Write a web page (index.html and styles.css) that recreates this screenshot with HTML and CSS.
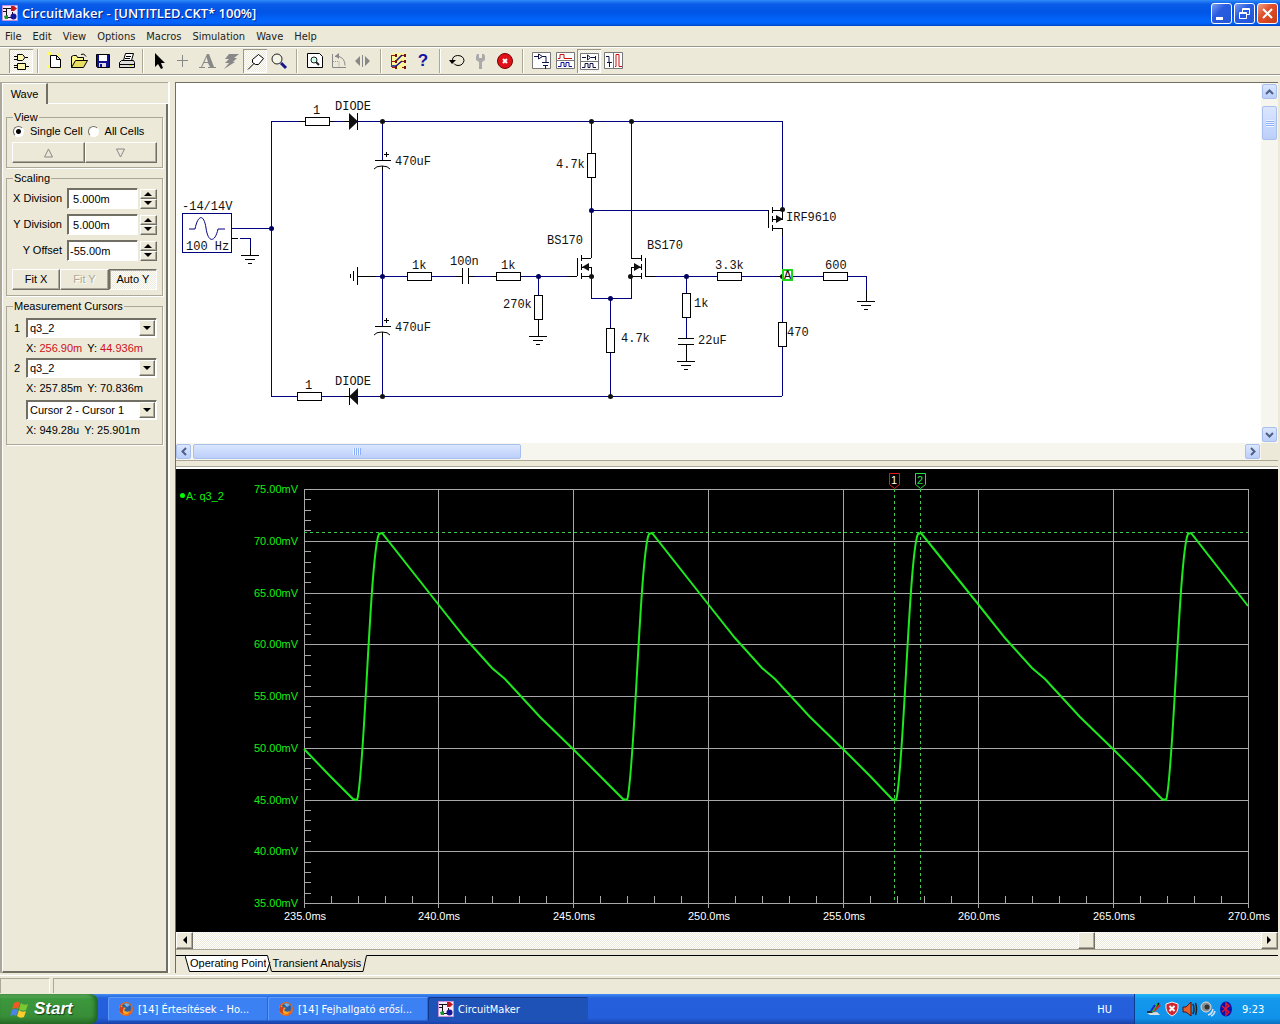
FILE: index.html
```html
<!DOCTYPE html>
<html lang="en">
<head>
  <meta charset="UTF-8" />
  <meta name="viewport" content="width=device-width, initial-scale=1.0" />
  <title>CircuitMaker - [UNTITLED.CKT* 100%]</title>
  <link rel="stylesheet" href="styles.css">
</head>
<body>
  <svg class="defs" width="0" height="0" aria-hidden="true">
    <symbol id="app-icon" viewBox="0 0 16 16">
      <path fill="#f6e8f8" stroke="#c78fd8" d="M.5.5h15v15H.5z"/>
      <path fill="none" stroke="#111" d="M1 3.500h9M4.500 3v9M1 6.500h4M4 12.500h5M10.500 7v3"/>
      <path fill="#c4141c" d="M9 1h3l3 2.500L12 6H9z"/>
      <circle cx="11.500" cy="11.500" r="3" fill="#16169a"/>
      <path fill="#139a2c" d="M2 11l4-1v4H3z"/>
    </symbol>
    <symbol id="firefox" viewBox="0 0 16 16">
      <circle cx="8" cy="8" r="7" fill="#e8661b"/>
      <circle cx="8.500" cy="7" r="4.800" fill="#2c5fa8"/>
      <path fill="#6fb6e6" d="M6 3q3-2 6 1l-3 2z"/>
      <path fill="#f7a823" d="M1 5q2-1 4 1l3 1-2 2q2 3 6 1-2 4-6 3.500T1 9z"/>
      <path fill="#d0401a" d="M2 3l1 3 3 0-1 3q-1 3 2 4-5 0-6-4z"/>
    </symbol>
  </svg>

  <header class="titlebar">
    <svg class="app-icon"><use href="#app-icon"/></svg>
    <h1>CircuitMaker - [UNTITLED.CKT* 100%]</h1>
    <div class="window-buttons">
      <button class="win" aria-label="Minimize"><svg width="19" height="19"><path fill="#fff" d="M4 13h7v3H4z"/></svg></button>
      <button class="win" aria-label="Restore"><svg width="19" height="19" fill="none" stroke="#fff"><path d="M7.500 8V4.500h7v6H12M7 5.500h8"/><path d="M4.500 8.500h7v6h-7zM4 9.500h8"/></svg></button>
      <button class="win close" aria-label="Close"><svg width="19" height="19"><path stroke="#fff" stroke-width="2" d="M5 5l9 9M14 5l-9 9"/></svg></button>
    </div>
  </header>

  <nav class="menubar">
    <a href="#">File</a><a href="#">Edit</a><a href="#">View</a><a href="#">Options</a><a href="#">Macros</a><a href="#">Simulation</a><a href="#">Wave</a><a href="#">Help</a>
  </nav>

  <div class="toolbar">
    <button class="tool pressed" aria-label="Parts"><svg viewBox="0 0 24 24"><path fill="#fff8b0" stroke="#000" d="M8.500 5.500h5q4 3 0 6h-5zM8.500 14.500h8v6h-8z"/><path stroke="#000" d="M5 7.500h3M5 10.500h3M16 8.500h3M5 16.500h3M5 18.500h3M17 17.500h3"/></svg></button>
    <span class="sep"></span>
    <button class="tool" aria-label="New"><svg viewBox="0 0 24 24"><path fill="#ff5" d="M5 3h3v3H5zM15 4l3 3h-3zM4 16h3v3H4zM16 17h3v3h-3z"/><path fill="#fff" stroke="#000" d="M7.500 6.500h6l4 4v8h-10zM13.500 6.500v4h4"/></svg></button>
    <button class="tool" aria-label="Open"><svg viewBox="0 0 24 24"><path fill="#fbf58c" stroke="#000" d="M4.500 18.500v-11l2-1h3l1 2h6v3"/><path fill="#e8de62" stroke="#000" d="M4.500 18.500l4-7h12l-4 7z"/><path fill="none" stroke="#000" d="M14 5.500q3-2 5 2"/></svg></button>
    <button class="tool" aria-label="Save"><svg viewBox="0 0 24 24"><path fill="#101090" stroke="#000" d="M5.500 5.500h13v13h-12l-1-1z"/><path fill="#fff" d="M8 6h8v6H8z"/><path fill="#ddd" d="M8 14h7v4H8z"/><path fill="#101090" d="M9 15h2v3H9z"/></svg></button>
    <button class="tool" aria-label="Print"><svg viewBox="0 0 24 24"><path fill="#fff" stroke="#000" d="M8.500 11.500l2-7h8l-2 7z"/><path stroke="#000" d="M11 7.500h5M10 9.500h5"/><path fill="#ddd" stroke="#000" d="M4.500 13.500l2-2h12l1 2v5h-15zM4 15.500h15"/><path fill="#dd0" d="M14 16h3v1h-3z"/></svg></button>
    <span class="sep tight"></span>
    <button class="tool" aria-label="Arrow"><svg viewBox="0 0 24 24"><path d="M8 4v14l3-3 3 5 2-1-2-5h4z"/></svg></button>
    <button class="tool" aria-label="Wire"><svg viewBox="0 0 24 24"><path stroke="#888" d="M11.500 6v12M6 11.500h11"/></svg></button>
    <button class="tool" aria-label="Text"><svg viewBox="0 0 24 24"><path fill="#888" d="M12 5h2l5 13h-4l-2-4H9l-2 4H6zM11.500 8L9.500 13h3.500z"/><path stroke="#888" d="M4 18.500h6M13 18.500h8"/></svg></button>
    <button class="tool" aria-label="Delete"><svg viewBox="0 0 24 24"><path fill="#888" d="M10 5h10l-5 4h3l-4 4h2L5 20l5-6H6l4-4H6z"/></svg></button>
    <button class="tool pressed" aria-label="Probe"><svg viewBox="0 0 24 24"><path fill="#fff" stroke="#000" d="M9.500 13.500v-3l6-5 5 4-5 6h-3zM5 20.500l6-6"/></svg></button>
    <button class="tool" aria-label="Zoom"><svg viewBox="0 0 24 24"><circle cx="10" cy="10" r="5" fill="#f4f4e8" stroke="#222"/><path stroke="#16168c" stroke-width="3" d="M14 14l5 5"/></svg></button>
    <span class="sep wide"></span>
    <button class="tool" aria-label="Zoom to fit"><svg viewBox="0 0 24 24"><path fill="#fff" stroke="#000" d="M4.500 4.500h12l3 3v11h-15z"/><circle cx="11" cy="11" r="3" fill="#cfe" stroke="#222"/><path stroke="#222" stroke-width="2" d="M13 13l3 3"/></svg></button>
    <button class="tool" aria-label="Rotate"><svg viewBox="0 0 24 24"><path fill="none" stroke="#888" d="M5.500 5v13.500H19M8 7.500h4q6 2 6 9"/><path fill="none" stroke="#999" stroke-dasharray="1 1" d="M6 12.500h6v6"/><path fill="#888" d="M12 4v6L8 7z"/></svg></button>
    <button class="tool" aria-label="Mirror"><svg viewBox="0 0 24 24"><path fill="#888" d="M9 7v10l-5-5zM14 7v10l5-5z"/><path stroke="#888" d="M11.500 6v12"/></svg></button>
    <span class="sep wide"></span>
    <button class="tool" aria-label="Digital options"><svg viewBox="0 0 24 24"><path fill="#fff59a" d="M5 4h14v16H5z"/><path fill="none" stroke="#a01818" d="M5 6.500h4M15 6.500h4M5 12.500h4M15 12.500h4M5 18.500h4M15 18.500h4M4.500 6v12"/><path fill="none" stroke="#12128c" stroke-width="1.500" d="M9 12l6-6M5 17h4l6-5"/><path fill="#701010" d="M8 5h2v3H8zM17 5h2v3h-2zM8 11h2v3H8zM17 11h2v3h-2zM8 17h2v3H8zM17 17h2v3h-2z"/></svg></button>
    <button class="tool help" aria-label="Help">?</button>
    <span class="sep"></span>
    <button class="tool" aria-label="Reset"><svg viewBox="0 0 24 24"><path fill="none" stroke="#000" d="M7.500 11q0-4 5-4.500 6 0 6.500 5-1 5-6 5-3 0-4-2"/><path d="M4 11h7l-4 4z"/></svg></button>
    <button class="tool" aria-label="Analysis setup"><svg viewBox="0 0 24 24"><path fill="#aaa" d="M8 5h2v4h3V5h2l1 2v4l-3 2v7h-3v-7l-3-2V7z"/></svg></button>
    <button class="tool" aria-label="Stop"><svg viewBox="0 0 24 24"><circle cx="12" cy="12" r="7.500" fill="#e01018" stroke="#700"/><path stroke="#fff" stroke-width="2" d="M10 10l4 4M14 10l-4 4"/></svg></button>
    <span class="sep wide"></span>
    <button class="tool" aria-label="Schematic view"><svg viewBox="0 0 24 24"><path fill="#fff" stroke="#777" d="M3.500 3.500h18v16h-18z"/><path fill="none" stroke="#114" d="M5 7.500h4M9.500 5v5l4-2.500zM13 7.500h4v6M13 13.500h7M14 16.500h5M16.500 17v3"/></svg></button>
    <button class="tool" aria-label="Waveform view"><svg viewBox="0 0 24 24"><path fill="#fff" stroke="#777" d="M3.500 3.500h18v16h-18zM3 11.500h18"/><path fill="none" stroke="#c11" d="M5 9.500h2v-4h4v4h8"/><path fill="none" stroke="#119" d="M5 17.500h3v-4h3v4h2v-4h3v4h3"/></svg></button>
    <button class="tool pressed" aria-label="Split horizontal"><svg viewBox="0 0 24 24"><path fill="#fff" stroke="#777" d="M3.500 4.500h18v16h-18zM3 12.500h18"/><path fill="none" stroke="#114" d="M5 8.500h4M10.500 6v5l3-2.500zM14 8.500h4M18.500 7v4M5 18.500h3v-4h3v4h2v-4h3v4h3"/></svg></button>
    <button class="tool" aria-label="Split vertical"><svg viewBox="0 0 24 24"><path fill="#fff" stroke="#777" d="M3.500 3.500h18v16h-18zM12.500 3v16"/><path fill="none" stroke="#114" d="M5 7.500h3v6M6 13.500h5M8.500 14v4"/><path fill="none" stroke="#c11" d="M14 17.500h1v-12h3v12h3"/></svg></button>
  </div>

  <main class="workspace">
    <aside class="sidebar">
      <div class="side-tabs"><button class="side-tab">Wave</button><span class="side-rest"></span></div>
      <form class="side-panel">
        <fieldset>
          <legend>View</legend>
          <div class="radios">
            <label><input type="radio" name="cells" checked>Single Cell</label>
            <label><input type="radio" name="cells">All Cells</label>
          </div>
          <div class="button-row">
            <button type="button" aria-label="Previous cell"><svg width="11" height="10" fill="none" stroke="#888"><path d="M5.500 1l4 8h-8z"/></svg></button>
            <button type="button" aria-label="Next cell"><svg width="11" height="10" fill="none" stroke="#888"><path d="M1.500 1h8l-4 8z"/></svg></button>
          </div>
        </fieldset>

        <fieldset class="scaling">
          <legend>Scaling</legend>
          <div class="field"><label for="xdiv">X Division</label><input id="xdiv" type="text" value=" 5.000m"><span class="spin"><button type="button" aria-label="X up"><svg width="9" height="5"><path d="M0 5l4-4 4 4z"/></svg></button><button type="button" aria-label="X down"><svg width="9" height="5"><path d="M0 0l4 4 4-4z"/></svg></button></span></div>
          <div class="field"><label for="ydiv">Y Division</label><input id="ydiv" type="text" value=" 5.000m"><span class="spin"><button type="button" aria-label="Y up"><svg width="9" height="5"><path d="M0 5l4-4 4 4z"/></svg></button><button type="button" aria-label="Y down"><svg width="9" height="5"><path d="M0 0l4 4 4-4z"/></svg></button></span></div>
          <div class="field"><label for="yoff">Y Offset</label><input id="yoff" type="text" value="-55.00m"><span class="spin"><button type="button" aria-label="Offset up"><svg width="9" height="5"><path d="M0 5l4-4 4 4z"/></svg></button><button type="button" aria-label="Offset down"><svg width="9" height="5"><path d="M0 0l4 4 4-4z"/></svg></button></span></div>
          <div class="button-row">
            <button type="button">Fit X</button>
            <button type="button" disabled>Fit Y</button>
            <button type="button" class="pressed">Auto Y</button>
          </div>
        </fieldset>

        <fieldset class="cursors">
          <legend>Measurement Cursors</legend>
          <label for="cur1">1</label>
          <span class="combo"><select id="cur1"><option>q3_2</option></select><i class="drop"></i></span>
          <p class="readout"><span>X: <b>256.90m</b></span><span>Y: <b>44.936m</b></span></p>
          <label for="cur2">2</label>
          <span class="combo"><select id="cur2"><option>q3_2</option></select><i class="drop"></i></span>
          <p class="readout"><span>X: 257.85m</span><span>Y: 70.836m</span></p>
          <span class="combo diff"><select aria-label="Difference"><option>Cursor 2 - Cursor 1</option></select><i class="drop"></i></span>
          <p class="readout"><span>X: 949.28u</span><span>Y: 25.901m</span></p>
        </fieldset>
      </form>
    </aside>

    <section class="documents">
      <div class="schematic-pane">
        <svg class="schematic" viewBox="176 83 1085 360">
          <defs>
            <path id="res-h" class="part" d="M-12-4h24v8h-24z"/>
            <path id="res-v" class="part" d="M-4-12h8v24h-8z"/>
            <path id="gnd" class="lead" d="M-9 0h18M-5 4h10M-2 8h4"/>
            <g id="pcap"><path class="lead" d="M-7 0h16M2-6h5M4-8v5"/><path class="curve" d="M-8 9q2-3 8-3t8 3"/></g>
          </defs>

          <!-- wires -->
          <path class="wire" d="M231 228H271M271 121V396M271 121H305M329 121H349M357 121H782V210M382 121V160M382 166V326M382 332V396M357 276H407M431 276H462M468 276H496M520 276H577M538 276V295M591 121V153M591 177V258M631 121V258M591 210H768M591 276V298H631V276M610 298V328M610 352V396M645 276H717M686 276V293M686 317V338M741 276H823M782 228V322M782 346V396M847 276H866V301M271 396H297M321 396H349M357 396H782M240 238H250V255"/>
          <path class="lead" d="M231 238h7M300 121h5M329 121h5M344 121h5M344 396h5M357 276h18M456 276h6M468 276h6M491 276h5M567 276h10M645 276h10M538 319v17M686 344v17M382 166v5M382 332v5M250 248v7M866 290v11M778 276h4"/>

          <!-- signal generator -->
          <path class="wire" d="M182 213h49v39h-49z"/>
          <path class="sine" d="M189 229h6C198 214 204 214 206 228 208 243 215 243 218 229h7"/>

          <use href="#res-h" x="317" y="121"/><use href="#res-h" x="309" y="396"/><use href="#res-h" x="419" y="276"/>
          <use href="#res-h" x="508" y="276"/><use href="#res-h" x="729" y="276"/><use href="#res-h" x="835" y="276"/>
          <use href="#res-v" x="538" y="307"/><use href="#res-v" x="591" y="165"/><use href="#res-v" x="610" y="340"/>
          <use href="#res-v" x="686" y="305"/><use href="#res-v" x="782" y="334"/>
          <use href="#gnd" x="250" y="255"/><use href="#gnd" x="538" y="336"/><use href="#gnd" x="686" y="361"/><use href="#gnd" x="866" y="301"/>
          <use href="#pcap" x="382" y="160"/><use href="#pcap" x="382" y="326"/>

          <!-- plates, left ground, diodes -->
          <path class="lead" d="M462 268v16M468 268v16M678 338h16M678 344h16M357 267v18M353 271v10M350 274v4M357 113v17M349 388v17"/>
          <path d="M349 113v17l9-8.500zM358 388v17l-9-8.500z"/>

          <!-- transistors -->
          <path class="lead" d="M577 258v18M581 255v6M581 264v6M581 273v6M581 258h10M581 267h10v9M581 276h10M645 258v18M641 255v6M641 264v6M641 273v6M641 258h-10M641 267h-10v9M641 276h-10M768 210v18M772 207v6M772 216v6M772 225v6M772 210h10M772 219h10v-10M772 228h10v8"/>
          <path d="M582 267l7-4v8zM641 267l-7-4v8zM783 219l-7-4v8z"/>

          <g class="nodes">
            <circle cx="271.500" cy="228.500" r="2.500"/><circle cx="382.500" cy="276.500" r="2.500"/><circle cx="538.500" cy="276.500" r="2.500"/><circle cx="591.500" cy="210.500" r="2.500"/><circle cx="610.500" cy="298.500" r="2.500"/><circle cx="686.500" cy="276.500" r="2.500"/>
          </g>
          <circle cx="382.500" cy="121.500" r="2.500"/><circle cx="591.500" cy="121.500" r="2.500"/><circle cx="631.500" cy="121.500" r="2.500"/><circle cx="591.500" cy="276.500" r="2.500"/><circle cx="630.500" cy="276.500" r="2.500"/><circle cx="782.500" cy="209.500" r="2.500"/><circle cx="382.500" cy="396.500" r="2.500"/><circle cx="610.500" cy="396.500" r="2.500"/><circle cx="782.500" cy="276.500" r="2.500"/>

          <path fill="#fff" stroke="#18d818" stroke-width="2" d="M783 270h9v10h-9z"/>
          <text x="784" y="279">A</text>

          <text x="182" y="210">-14/14V</text><text x="186" y="250">100 Hz</text>
          <text x="313" y="114">1</text><text x="335" y="110">DIODE</text>
          <text x="305" y="389">1</text><text x="335" y="385">DIODE</text>
          <text x="395" y="165">470uF</text><text x="395" y="331">470uF</text>
          <text x="412" y="269">1k</text><text x="450" y="265">100n</text><text x="501" y="269">1k</text>
          <text x="503" y="308">270k</text><text x="556" y="168">4.7k</text><text x="621" y="342">4.7k</text>
          <text x="547" y="244">BS170</text><text x="647" y="249">BS170</text>
          <text x="694" y="307">1k</text><text x="698" y="344">22uF</text><text x="715" y="269">3.3k</text>
          <text x="786" y="221">IRF9610</text><text x="825" y="269">600</text><text x="787" y="336">470</text>
        </svg>
        <div class="xp-scroll vertical">
          <button aria-label="Scroll up"><svg width="9" height="6"><path d="M1 5l3.500-3.500L8 5"/></svg></button>
          <span class="thumb"></span>
          <button aria-label="Scroll down"><svg width="9" height="6"><path d="M1 1l3.500 3.500L8 1"/></svg></button>
        </div>
        <div class="xp-scroll horizontal">
          <button aria-label="Scroll left"><svg width="6" height="9"><path d="M5 1L1.500 4.500 5 8"/></svg></button>
          <span class="thumb"></span>
          <button aria-label="Scroll right"><svg width="6" height="9"><path d="M1 1l3.500 3.500L1 8"/></svg></button>
        </div>
      </div>

      <div class="splitter"></div>

      <div class="wave-pane">
        <svg class="plot" viewBox="176 469 1102 463">
          <path class="grid" d="M304 489H1248M304 541H1248M304 593H1248M304 644H1248M304 696H1248M304 748H1248M304 800H1248M304 851H1248M304 903H1248M304 489V908M438 489V908M573 489V908M708 489V908M843 489V908M978 489V908M1113 489V908M1248 489V908"/>
          <path class="grid" d="M304 499h7M304 510h7M304 520h7M304 530h7M304 551h7M304 562h7M304 572h7M304 582h7M304 603h7M304 613h7M304 624h7M304 634h7M304 655h7M304 665h7M304 675h7M304 686h7M304 706h7M304 717h7M304 727h7M304 737h7M304 758h7M304 768h7M304 779h7M304 789h7M304 810h7M304 820h7M304 830h7M304 841h7M304 862h7M304 872h7M304 882h7M304 893h7"/>
          <path class="grid" d="M331 896v7M358 896v7M385 896v7M412 896v7M465 896v7M492 896v7M519 896v7M546 896v7M600 896v7M627 896v7M654 896v7M681 896v7M735 896v7M762 896v7M789 896v7M816 896v7M870 896v7M897 896v7M924 896v7M951 896v7M1005 896v7M1032 896v7M1059 896v7M1086 896v7M1140 896v7M1167 896v7M1194 896v7M1221 896v7"/>
          <path class="cursor" d="M304 532H1248M894 489V903M920 489V903"/>
          <path class="trace" d="M304 749L330 776 353 799 357 800C364 786 370 552 379 534L382 533 438 604 465 638 492 668 505 679 540 717 573 749 600 776 623 799 627 800C634 786 640 552 649 534L652 533 708 604 735 638 762 668 775 679 810 717 843 749 870 776 892 799 896 800C903 786 909 552 918 534L921 533 978 604 1005 638 1032 668 1045 679 1080 717 1113 749 1140 776 1162 799 1166 800C1173 786 1179 552 1188 534L1191 533 1248 606"/>
          <path fill="#000" stroke="#e01818" d="M889.500 473.500h10v11l-5 4-5-4z"/>
          <path fill="#000" stroke="#28e048" d="M915.500 473.500h10v11l-5 4-5-4z"/>
          <text class="flag" x="891" y="484">1</text><text class="flag two" x="917" y="484">2</text>
          <circle cx="182.500" cy="495.500" r="2.500" fill="#0f0"/>
          <text class="level" x="186" y="500">A: q3_2</text>
          <g class="level end">
            <text x="298" y="493">75.00mV</text><text x="298" y="545">70.00mV</text><text x="298" y="597">65.00mV</text><text x="298" y="648">60.00mV</text><text x="298" y="700">55.00mV</text><text x="298" y="752">50.00mV</text><text x="298" y="804">45.00mV</text><text x="298" y="855">40.00mV</text><text x="298" y="907">35.00mV</text>
          </g>
          <g class="time">
            <text x="305" y="920">235.0ms</text><text x="439" y="920">240.0ms</text><text x="574" y="920">245.0ms</text><text x="709" y="920">250.0ms</text><text x="844" y="920">255.0ms</text><text x="979" y="920">260.0ms</text><text x="1114" y="920">265.0ms</text><text x="1249" y="920">270.0ms</text>
          </g>
        </svg>
      </div>
      <div class="classic-scroll">
        <button aria-label="Scroll left"><svg width="5" height="9"><path d="M5 0v8L1 4z"/></svg></button>
        <span class="track"></span><span class="thumb"></span><span class="track end"></span>
        <button aria-label="Scroll right"><svg width="5" height="9"><path d="M0 0v8l4-4z"/></svg></button>
      </div>
      <div class="sheet-tabs">
        <span class="lead-in"></span>
        <svg width="5" height="17"><path fill="#fff" stroke="#000" d="M0 .500h6v16H4.500z"/></svg>
        <button class="sheet">Operating Point</button>
        <svg width="6" height="17"><path fill="#fff" d="M0 0h2l2 6-2 10H0z"/><path fill="none" stroke="#000" d="M0 .500h1.500L5.500 16.500M0 16.500h1L4 7"/></svg>
        <button class="sheet active">Transient Analysis</button>
        <svg width="7" height="17"><path fill="none" stroke="#000" d="M7 .500H5.500L2 16.500H0"/></svg>
        <span class="rest"></span>
      </div>
    </section>
  </main>

  <div class="statusbar"><span class="cell small"></span><span class="cell"></span></div>

  <footer class="taskbar">
    <button class="start">
      <svg width="20" height="19" viewBox="0 0 20 19"><path fill="#ee5a24" d="M4 3q4-3 6 0L8 9Q6 7 2 9z"/><path fill="#7cc832" d="M11 3q3 3 7 1l-2 6q-4 2-7-1z"/><path fill="#4b83ea" d="M2 10q3-2 6 0l-2 6q-3-2-6 0z"/><path fill="#fccb2c" d="M9 10q3 3 7 1l-2 6q-4 2-7-1z"/></svg>
      Start
    </button>
    <div class="tasks">
      <button class="task"><svg><use href="#firefox"/></svg>[14] Értesítések - Ho...</button>
      <button class="task"><svg><use href="#firefox"/></svg>[14] Fejhallgató erősí...</button>
      <button class="task current"><svg><use href="#app-icon"/></svg>CircuitMaker</button>
    </div>
    <span class="lang">HU</span>
    <div class="tray">
      <svg viewBox="0 0 16 16"><path fill="#ddd" d="M1 12l10-1 3 3H4z"/><path fill="none" stroke="#111" stroke-width="1.500" d="M1 11h5l7-9"/><path stroke="#d22" stroke-width="2" d="M8 10l6-6"/><path stroke="#2b2" stroke-width="2" d="M6 11l5-8"/><path stroke="#22d" stroke-width="2" d="M5 10l4-6"/></svg>
      <svg viewBox="0 0 16 16"><path fill="#d3242c" stroke="#eee" d="M8 1l6 2q1 9-6 12Q1 12 2 3z"/><path stroke="#fff" stroke-width="2" d="M5.500 5l5 5M10.500 5l-5 5"/></svg>
      <svg viewBox="0 0 16 16"><path fill="#e2622c" stroke="#511" d="M1 6h3l5-5v14l-5-4H1z"/><path fill="none" stroke="#222" stroke-width="1.500" d="M11 3q2 5 0 10M13.500 2q2 6 0 12"/></svg>
      <svg viewBox="0 0 16 16"><circle cx="6" cy="6" r="5" fill="#8a8f94" stroke="#ddd"/><circle cx="7" cy="6" r="2.500" fill="#333"/><path fill="none" stroke="#cfe3ff" stroke-width="1.500" d="M8 14q4-1 5-6M11 15q3-1 4-5"/></svg>
      <svg viewBox="0 0 16 16"><ellipse cx="8" cy="8" rx="6" ry="7.500" fill="#1111a8"/><path fill="none" stroke="#e01830" stroke-width="1.500" d="M4 5l7 6-3 3V2l3 3-7 6"/></svg>
      <span class="clock">9:23</span>
    </div>
  </footer>
</body>
</html>
```
FILE: styles.css
```css
* {
  box-sizing: border-box;
}
body {
  margin: 0;
  min-height: 100vh;
  display: flex;
  flex-direction: column;
  background: #ece9d8;
  color: #000;
  font: 11px/13px "Liberation Sans", Arial, sans-serif;
}
button, input, select {
  font: inherit;
  color: inherit;
  margin: 0;
  padding: 0;
  border-radius: 0;
}
svg {
  flex: none;
  display: block;
}
.defs {
  position: absolute;
}

/* title bar */
.titlebar {
  height: 26px;
  padding: 0 2px;
  display: flex;
  align-items: center;
  gap: 4px;
  background: linear-gradient(#2f8cf8 0, #0a5ce8 4px, #0055e5 12px, #0264fc 20px, #0264fc 23px, #0148c8);
}
.app-icon {
  width: 16px;
  height: 16px;
}
.titlebar h1 {
  flex: 1;
  margin: 0;
  color: #fff;
  font: 600 13px/20px "Open Sans", "Noto Sans", sans-serif;
  text-shadow: 1px 1px #0a1883;
}
.window-buttons {
  display: flex;
  gap: 2px;
}
.win {
  width: 21px;
  height: 21px;
  border: 1px solid #fff;
  border-radius: 3px;
  background: linear-gradient(135deg, #7a9cf0, #2a5ce0 40%, #2456d8);
}
.win.close {
  background: linear-gradient(135deg, #f0a088, #e0502c 40%, #c83c14);
}

/* menu and toolbar */
.menubar {
  height: 20px;
  padding: 0 5px;
  display: flex;
  align-items: center;
  gap: 11px;
  font-family: "DejaVu Sans Condensed", "DejaVu Sans", sans-serif;
}
.menubar a {
  color: #222;
  text-decoration: none;
}
.toolbar {
  height: 29px;
  padding: 0 9px;
  display: flex;
  align-items: center;
  border-top: 1px solid #9a9788;
  border-bottom: 1px solid #9a9788;
  box-shadow: inset 0 1px #fff, 0 1px #fff;
}
.tool {
  width: 24px;
  height: 24px;
  border: 0;
  background: none;
}
.tool svg {
  width: 24px;
  height: 24px;
}
.tool.pressed {
  background: repeating-conic-gradient(#fff 0 25%, #ece9d8 0 50%) 0 0 / 2px 2px;
  box-shadow: inset 1px 1px #9a9788, inset -1px -1px #fff;
}
.tool.help {
  color: #1414a0;
  font: bold 17px/24px "Liberation Sans", sans-serif;
}
.sep {
  width: 2px;
  height: 24px;
  margin: 0 4px;
  border-left: 1px solid #aca899;
  border-right: 1px solid #fff;
}
.sep.tight {
  margin: 0 3px;
}
.sep.wide {
  margin: 0 5px;
}

.workspace {
  flex: 1;
  display: flex;
  padding: 7px 2px 2px 0;
}

/* sidebar */
.sidebar {
  flex: none;
  width: 168px;
  margin-right: 7px;
  display: flex;
  flex-direction: column;
  border-left: 2px solid #aca899;
  border-top: 1px solid #aca899;
  box-shadow: 2px 0 #fff;
}
.side-tabs {
  display: flex;
  height: 21px;
}
.side-tab {
  width: 46px;
  border: 0;
  border-top: 1px solid #fff;
  border-left: 1px solid #fff;
  border-right: 2px solid #716f64;
  background: none;
}
.side-rest {
  flex: 1;
  border-bottom: 1px solid #fff;
}
.side-panel {
  flex: 1;
  padding: 7px 3px 0;
  display: flex;
  flex-direction: column;
  gap: 4px;
  border-left: 1px solid #fff;
  border-right: 2px solid #716f64;
  border-bottom: 2px solid #716f64;
}
fieldset {
  margin: 0;
  min-width: 0;
  padding: 0 5px 4px;
  border: 1px solid #aca899;
  box-shadow: 1px 1px #fff;
}
legend {
  margin-left: 1px;
  padding: 0 1px;
}
.radios {
  display: flex;
  gap: 5px;
  height: 14px;
  padding-left: 1px;
  margin-bottom: 4px;
}
.radios label {
  display: flex;
  align-items: center;
  gap: 6px;
  white-space: nowrap;
}
input[type="radio"] {
  appearance: none;
  width: 11px;
  height: 11px;
  border: 1px solid;
  border-color: #716f64 #fff #fff #716f64;
  border-radius: 50%;
  background: #fff;
}
input[type="radio"]:checked {
  background: radial-gradient(#000 2px, #fff 3px);
}
.button-row {
  display: flex;
}
.button-row button {
  flex: 1;
  height: 21px;
  display: flex;
  align-items: center;
  justify-content: center;
  background: #ece9d8;
  border: 1px solid;
  border-color: #fff #716f64 #716f64 #fff;
  box-shadow: inset -1px -1px #aca899;
  white-space: nowrap;
}
.button-row button:disabled {
  color: #aca899;
  text-shadow: 1px 1px #fff;
}
.button-row .pressed {
  border-color: #716f64 #fff #fff #716f64;
  background: repeating-conic-gradient(#fff 0 25%, #ece9d8 0 50%) 0 0 / 2px 2px;
  box-shadow: inset 1px 1px #aca899;
}
.scaling {
  padding-top: 3px;
  padding-bottom: 5px;
}
.field {
  display: flex;
  align-items: center;
  margin-bottom: 5px;
}
.field label {
  flex: 1;
  padding-right: 5px;
  text-align: right;
  white-space: nowrap;
}
.field input {
  width: 71px;
  height: 21px;
  margin-right: 2px;
  padding: 0 2px;
  white-space: pre;
}
.field input, .combo {
  background: #fff;
  border: 1px solid;
  border-color: #716f64 #fff #fff #716f64;
  box-shadow: inset 1px 1px #716f64;
}
.spin {
  width: 17px;
  display: flex;
  flex-direction: column;
}
.spin button, .drop, .classic-scroll button, .classic-scroll .thumb {
  display: flex;
  align-items: center;
  justify-content: center;
  background: #ece9d8;
  border: 1px solid;
  border-color: #fff #716f64 #716f64 #fff;
  box-shadow: inset -1px -1px #aca899;
}
.spin button {
  height: 10px;
}
.field + .button-row {
  margin-top: 8px;
}
.cursors {
  display: grid;
  grid-template-columns: 14px 1fr;
  align-items: center;
  padding-top: 5px;
}
.cursors label {
  padding-left: 2px;
}
.combo {
  height: 20px;
  display: flex;
  padding: 1px;
}
.combo select {
  flex: 1;
  min-width: 0;
  padding-left: 2px;
  appearance: none;
  border: 0;
  background: none;
}
.drop {
  width: 16px;
}
.drop::before {
  content: "";
  border: 4px solid transparent;
  border-top-color: #000;
  border-bottom: 0;
}
.readout {
  grid-column: 2;
  margin: 4px 0 3px;
  display: flex;
  gap: 5px;
  white-space: nowrap;
}
.readout b {
  font-weight: normal;
  color: #d01020;
}
.combo.diff {
  grid-column: 2;
  margin-top: 2px;
}

/* schematic */
.documents {
  flex: 1;
  min-width: 0;
  display: flex;
  flex-direction: column;
  border-left: 1px solid #716f64;
}
.schematic-pane {
  display: grid;
  grid-template-columns: 1fr 17px;
  grid-template-rows: auto 17px;
  border-top: 1px solid #716f64;
  border-bottom: 1px solid #aca899;
}
.schematic {
  width: 100%;
  background: #fff;
  fill: #111;
  font: 12px "Liberation Mono", "Courier New", monospace;
}
.wire, .lead, .part {
  fill: none;
  stroke: #000080;
  shape-rendering: crispEdges;
}
.lead {
  stroke: #000;
}
.part {
  fill: #fff;
  stroke: #000;
}
.sine, .curve {
  fill: none;
  stroke: #000080;
}
.curve {
  stroke: #000;
}
.nodes {
  fill: #000060;
}
.xp-scroll {
  display: flex;
  background: #f6f5ee;
}
.xp-scroll.vertical {
  flex-direction: column;
  justify-content: space-between;
  padding: 1px;
}
.xp-scroll.horizontal {
  padding: 1px 1px 1px 0;
}
.xp-scroll button, .xp-scroll .thumb {
  display: flex;
  align-items: center;
  justify-content: center;
  width: 15px;
  height: 15px;
  border: 1px solid #a9bfee;
  border-radius: 2px;
  background: linear-gradient(#dbe6fe, #bccffa);
}
.xp-scroll button path {
  fill: none;
  stroke: #4d6185;
  stroke-width: 2;
}
.xp-scroll.vertical .thumb {
  height: 34px;
  margin: 7px 0 auto;
}
.xp-scroll.horizontal .thumb {
  width: 328px;
  margin: 0 auto 0 2px;
}
.xp-scroll .thumb::before {
  content: "";
  width: 8px;
  height: 7px;
  background: repeating-linear-gradient(90deg, #eef4fe 0 1px, #8cb0f8 1px 2px);
}
.xp-scroll.vertical .thumb::before {
  background: repeating-linear-gradient(#eef4fe 0 1px, #8cb0f8 1px 2px);
}
.splitter {
  height: 8px;
  border-bottom: 1px solid #fff;
  box-shadow: inset 0 -1px #fff, inset 0 -2px #aca899;
}

/* wave plot */
.wave-pane {
  flex: 1;
  background: #000;
}
.plot {
  width: 100%;
}
.grid, .cursor {
  fill: none;
  stroke: #a8a8a8;
  shape-rendering: crispEdges;
}
.cursor {
  stroke: #3ecb50;
  stroke-dasharray: 3 3;
}
.trace {
  fill: none;
  stroke: #1ee81e;
  stroke-width: 2;
}
.level {
  fill: #12f012;
}
.end {
  text-anchor: end;
}
.time {
  fill: #fff;
  text-anchor: middle;
}
.flag {
  fill: #fff;
}
.flag.two {
  fill: #28e048;
}
.classic-scroll {
  display: flex;
  height: 18px;
  border-bottom: 1px solid #aca899;
}
.classic-scroll button, .classic-scroll .thumb {
  width: 17px;
}
.track {
  flex: 885;
  background: repeating-conic-gradient(#fff 0 25%, #ece9d8 0 50%) 0 0 / 2px 2px;
}
.track.end {
  flex: 166;
}
.sheet-tabs {
  display: flex;
  height: 23px;
  padding-top: 5px;
}
.sheet {
  height: 17px;
  border: 0;
  border-top: 1px solid #000;
  border-bottom: 1px solid #000;
  background: #fff;
  white-space: nowrap;
}
.sheet.active {
  border-top-color: transparent;
  background: none;
}
.lead-in, .rest {
  width: 9px;
  border-top: 1px solid #000;
}
.rest {
  flex: 1;
}

/* status bar */
.statusbar {
  height: 19px;
  padding: 2px 0 1px;
  display: flex;
  gap: 3px;
  border-top: 1px solid #fff;
}
.cell {
  flex: 1;
  border-top: 1px solid #aca899;
  border-left: 1px solid #aca899;
}
.cell.small {
  flex: none;
  width: 50px;
  border-right: 1px solid #fff;
}

/* taskbar */
.taskbar {
  height: 30px;
  display: flex;
  align-items: stretch;
  color: #fff;
  background: linear-gradient(#3f8cf3 0, #2560dc 4px, #245edb 24px, #1941a5);
  font-family: "DejaVu Sans Condensed", "DejaVu Sans", sans-serif;
}
.start {
  width: 98px;
  padding-left: 10px;
  display: flex;
  align-items: center;
  gap: 4px;
  border: 0;
  border-radius: 0 8px 8px 0;
  background: linear-gradient(#6cb86c 0, #3c983c 5px, #388e38 22px, #2a6e2a);
  box-shadow: inset -3px 0 4px #1f6420;
  font: italic bold 17px/24px "Liberation Sans", sans-serif;
  text-shadow: 1px 1px 1px #143c14;
}
.tasks {
  flex: 1;
  padding: 3px 0 3px 10px;
  display: flex;
}
.task {
  flex: 0 1 160px;
  padding: 0 10px;
  display: flex;
  align-items: center;
  gap: 4px;
  border: 0;
  border-radius: 2px;
  background: #3c81f3;
  box-shadow: inset 1px 1px #5c9afc, inset -1px -1px #2c64d0;
  white-space: nowrap;
}
.task svg {
  width: 16px;
  height: 16px;
}
.task.current {
  background: #1e52b7;
  box-shadow: inset 1px 1px #14398a;
}
.lang {
  align-self: center;
  margin-right: 22px;
}
.tray {
  width: 146px;
  padding: 0 0 0 11px;
  display: flex;
  align-items: center;
  gap: 2px;
  border-left: 1px solid #0a3c94;
  background: linear-gradient(#20b8f8 0, #1298ec 5px, #1192ea 24px, #0c70c0);
}
.tray svg {
  width: 16px;
  height: 16px;
}
.clock {
  margin-left: 6px;
}
```
